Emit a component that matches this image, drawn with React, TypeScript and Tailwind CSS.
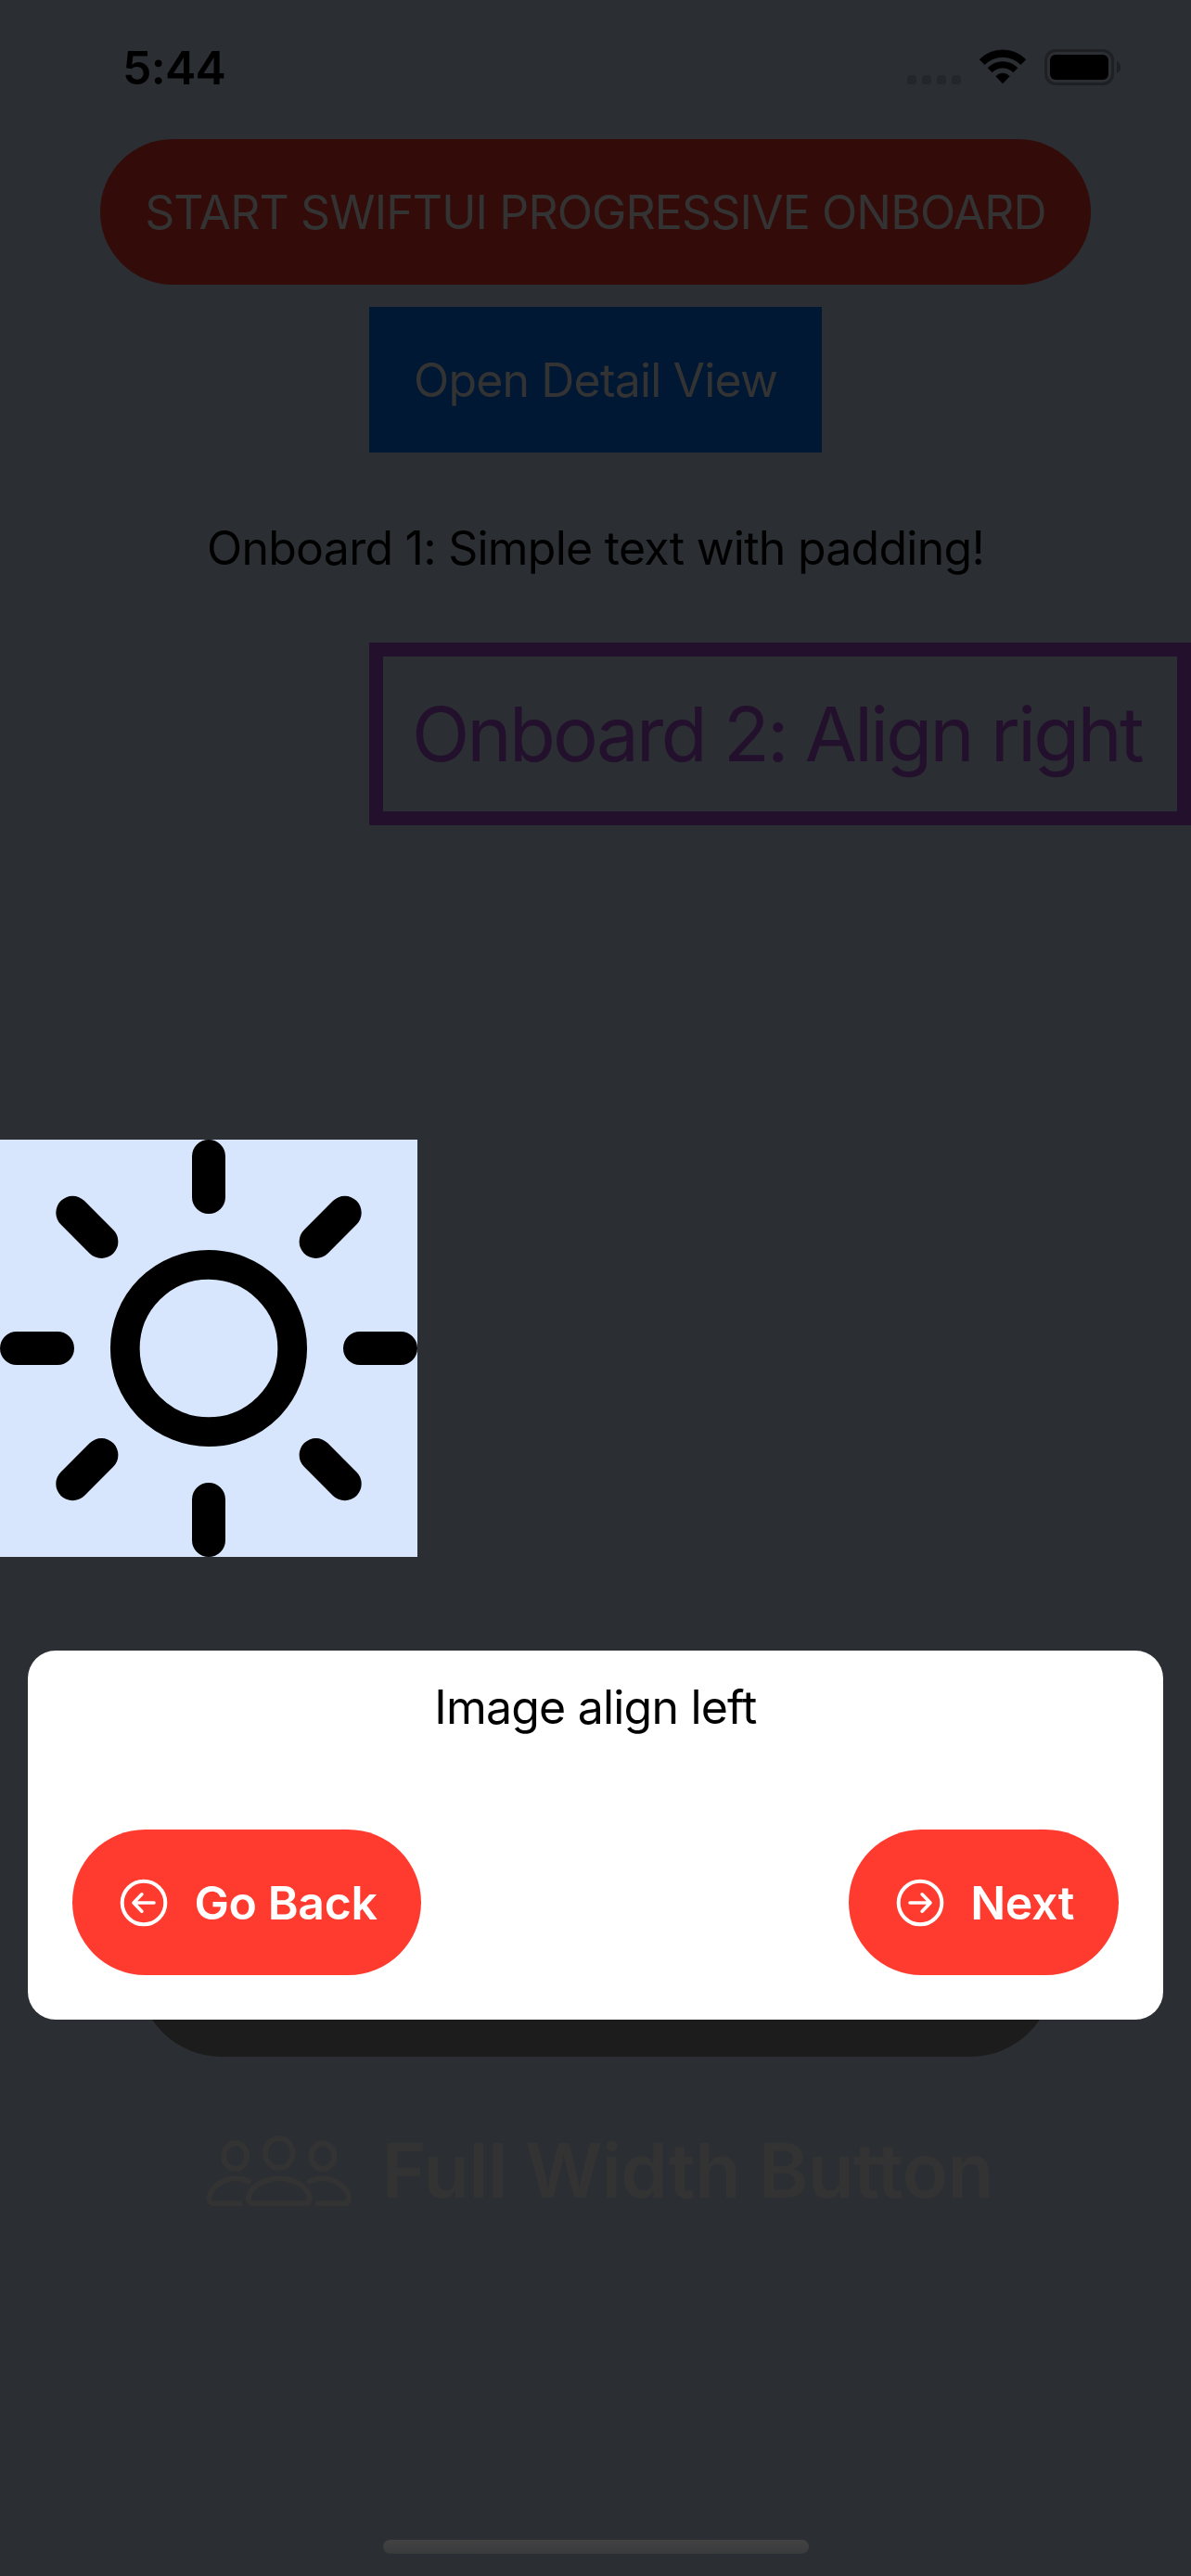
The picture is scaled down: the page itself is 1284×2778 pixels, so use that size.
import type { ReactNode } from "react";

function WifiIcon() {
  return (
    <svg width="52" height="38" viewBox="0 0 52 38" className="ml-[66px] mb-px shrink-0">
      <path d="M1.2 11.2 A35 35 0 0 1 50.8 11.2 L45.5 16.6 A27.3 27.3 0 0 0 6.5 16.6 Z" stroke="#000" strokeWidth="0.8" strokeLinejoin="round" />
      <path d="M10.1 20.3 A22.3 22.3 0 0 1 41.9 20.3 L37.4 24.8 A16 16 0 0 0 14.6 24.8 Z" stroke="#000" strokeWidth="0.8" strokeLinejoin="round" />
      <path d="M18.8 29.2 A10 10 0 0 1 33.2 29.2 L26 36.8 Z" stroke="#000" strokeWidth="0.8" strokeLinejoin="round" />
    </svg>
  );
}

function BatteryIcon() {
  return (
    <svg width="84" height="40" viewBox="0 0 84 40" className="ml-[19px] shrink-0">
      <rect x="1.5" y="1.5" width="72" height="36" rx="10.5" fill="none" stroke="#1e2023" strokeWidth="3" />
      <rect x="6" y="6" width="63" height="27" rx="6" fill="#000" />
      <path d="M78 13 Q82 15 82 19.5 Q82 24 78 26 Z" fill="#1e2023" />
    </svg>
  );
}

function StatusBar() {
  return (
    <header className="flex h-[150px] shrink-0 items-start justify-between pl-[132px] pr-[74px]">
      <span className="mt-[43px] text-[50px] leading-[60px] font-semibold tracking-[-0.7px] text-black">5:44</span>
      <div className="mt-[53px] flex items-start">
        <div className="relative flex h-[38px] items-end">
          <div className="absolute bottom-0 left-0 flex gap-[6px]">
            {[0, 1, 2, 3].map((i) => (
              <span key={i} className="h-[10px] w-[10px] rounded-[3.5px] bg-[#23272a]" />
            ))}
          </div>
        </div>
        <div className="ml-[11px] flex">
          <WifiIcon />
          <BatteryIcon />
        </div>
      </div>
    </header>
  );
}

function SunIcon() {
  return (
    <svg width="450" height="450" viewBox="0 0 450 450" fill="none" stroke="#000" strokeWidth="36" strokeLinecap="round">
      <circle cx="225" cy="225" r="90.2" strokeWidth="31.7" />
      <path d="M225 18V62 M225 388V432 M18 225H62 M388 225H432" />
      <path d="M78.3 78.8L109.4 109.9 M371.7 78.8L340.6 109.9 M78.3 371.2L109.4 340.1 M371.7 371.2L340.6 340.1" />
    </svg>
  );
}

function PeopleIcon() {
  return (
    <svg width="158.3" height="78.3" viewBox="275 410 475 235" fill="none" stroke="#333333" strokeWidth="18" className="shrink-0">
      <ellipse cx="511.5" cy="470" rx="44.5" ry="48" />
      <ellipse cx="370" cy="479.5" rx="37.5" ry="41.5" />
      <ellipse cx="653" cy="479.5" rx="37.5" ry="41.5" />
      <path d="M430 633 Q411 633 413 613 C420 580 460 552 511.5 552 C563 552 603 580 610 613 Q612 633 593 633 Z" />
      <path d="M393 633 H303 Q284 633 285 614 C292 580 328 552 372 552 C391 552 406 557 420 565" />
      <path d="M630 633 H720 Q739 633 738 614 C731 580 695 552 651 552 C632 552 617 557 603 565" />
    </svg>
  );
}

function ArrowCircle({ direction }: { direction: "left" | "right" }) {
  return (
    <svg
      width="52"
      height="52"
      viewBox="0 0 52 52"
      fill="none"
      stroke="#fff"
      strokeWidth="4"
      strokeLinecap="round"
      strokeLinejoin="round"
      className={direction === "right" ? "shrink-0 -scale-x-100" : "shrink-0"}
    >
      <circle cx="26" cy="26" r="23.3" />
      <path strokeWidth="3.6" d="M37 26H15.2 M23.9 16.8L15 26L23.9 35.2" />
    </svg>
  );
}

function PillButton({ direction, children }: { direction: "left" | "right"; children: ReactNode }) {
  return (
    <button className="flex h-[157px] items-center gap-[28.5px] rounded-[78.5px] bg-[#ff3b30] pr-[48px] pl-[51px] text-[50px] leading-[60px] font-semibold tracking-[-0.4px] text-white">
      <ArrowCircle direction={direction} />
      <span>{children}</span>
    </button>
  );
}

function OnboardCard() {
  return (
    <div className="absolute top-[1780px] right-[30px] left-[30px] flex h-[398px] flex-col rounded-[30px] bg-white px-[48px]">
      <p className="mt-[31px] text-center text-[50px] leading-[60px] tracking-[-0.8px] text-black">Image align left</p>
      <div className="mt-[102px] flex justify-between">
        <PillButton direction="left">Go Back</PillButton>
        <PillButton direction="right">Next</PillButton>
      </div>
    </div>
  );
}

export default function App() {
  return (
    <main className="relative flex h-[2778px] w-[1284px] flex-col overflow-hidden bg-[#2b2e32] font-['Inter','Liberation_Sans',sans-serif] whitespace-nowrap">
      <StatusBar />
      <button className="flex h-[157px] w-[1068px] shrink-0 items-center justify-center self-center rounded-[78.5px] bg-[#330c0a] text-[50px] leading-[60px] tracking-[-0.87px] text-[#333333]">
        START SWIFTUI PROGRESSIVE ONBOARD
      </button>
      <button className="mt-[24px] flex h-[157px] w-[488px] shrink-0 items-center justify-center self-center bg-[#001833] text-[50px] leading-[60px] tracking-[-0.85px] text-[#333333]">
        Open Detail View
      </button>
      <p className="mt-[73px] shrink-0 text-center text-[50px] leading-[60px] tracking-[-0.75px] text-black">
        Onboard 1: Simple text with padding!
      </p>
      <div className="mt-[72px] flex h-[197px] w-[886px] shrink-0 items-center self-end border-[15px] border-[#23102c] pl-[31px] text-[81.5px] leading-[100px] tracking-[-2.75px] text-[#23102c]">
        Onboard 2: Align right
      </div>
      <div className="mt-[339px] h-[450px] w-[450px] shrink-0 bg-[#d7e6fc]">
        <SunIcon />
      </div>
      <div className="mt-[341px] h-[198px] w-[987px] shrink-0 self-center rounded-[90px] bg-[#1c1c1c]" />
      <div className="mt-[73px] flex h-[100px] shrink-0 items-center pl-[221.5px]">
        <PeopleIcon />
        <span className="ml-[32px] text-[81.5px] leading-[100px] font-semibold tracking-[-0.75px] text-[#333333]">Full Width Button</span>
      </div>
      <div className="mt-auto mb-[24px] h-[15px] w-[459px] shrink-0 self-center rounded-full bg-linear-to-b from-[#424243] to-[#3a3b3c]" />
      <OnboardCard />
    </main>
  );
}
